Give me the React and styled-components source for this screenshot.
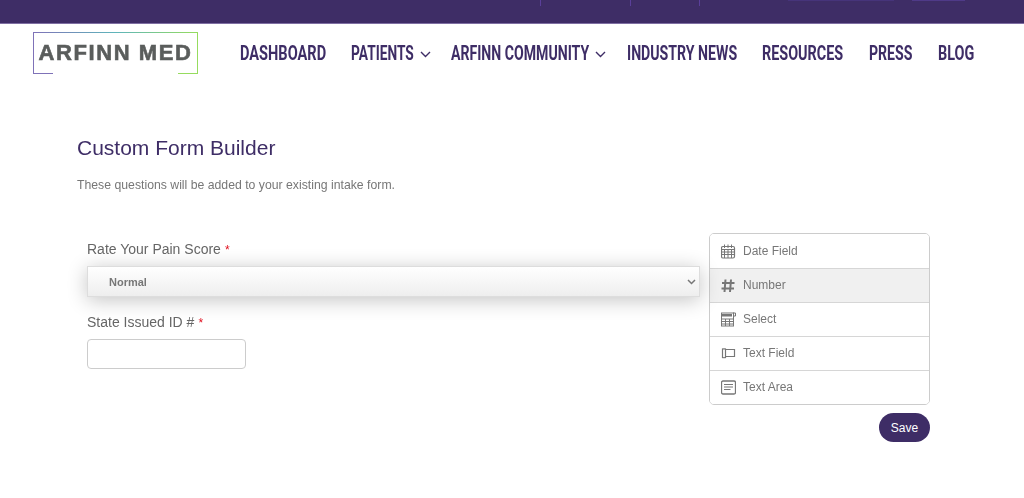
import React from 'react';
import styled, { createGlobalStyle } from 'styled-components';

const GlobalStyle = createGlobalStyle`
    html, body {
        margin: 0;
        padding: 0;
        background: #fff;
        font-family: "Liberation Sans", Arial, sans-serif;
    }
    body {
        overflow: hidden;
    }
`;

// the reference is a slightly soft capture
const Page = styled.div`
    filter: blur(0.35px);
`;

// top bar
const TopBar = styled.div`
    height: 23px;
    background: #3e2d66;
    border-bottom: 1px solid #7f6fa3;
    display: flex;
    align-items: flex-start;
    padding-left: 540px;
`;
const TopDivider = styled.span`
    display: block;
    width: 1px;
    height: 6px;
    background: #5a3f9a;
    margin-right: ${props => props.gap}px;
`;
const TopLine = styled.span`
    display: block;
    width: ${props => props.w}px;
    height: 1px;
    background: ${props => props.color};
    margin-right: ${props => props.gap}px;
`;

// header
const Header = styled.header`
    height: 60px;
    display: flex;
    align-items: flex-start;
    padding: 8px 0 0 33px;
`;
const Logo = styled.div`
    position: relative;
    box-sizing: border-box;
    width: 165px;
    height: 42px;
    display: flex;
    align-items: center;
    justify-content: center;
    font-weight: 700;
    font-size: 22px;
    letter-spacing: 1.6px;
    color: #5a5d5c;
    -webkit-text-stroke: 0.6px #5a5d5c;
    white-space: nowrap;
    border-left: 1px solid #7f72b8;
    border-right: 1px solid #96dc5e;
`;
const LogoTop = styled.span`
    position: absolute;
    top: 0;
    left: -1px;
    right: -1px;
    height: 1px;
    background: linear-gradient(90deg, #7f72b8 0%, #5fb5bb 50%, #96dc5e 100%);
`;
const LogoCorner = styled.span`
    position: absolute;
    bottom: 0;
    width: 20px;
    height: 1px;
    ${props => (props.right ? 'right: -1px; background: #96dc5e;' : 'left: -1px; background: #7f72b8;')}
`;
const Nav = styled.nav`
    display: flex;
    align-items: center;
    height: 28px;
    margin-top: 7px;
    margin-left: 42px;
`;
const NavItem = styled.a`
    display: flex;
    align-items: center;
    white-space: nowrap;
    width: ${props => props.w}px;
`;
const NavLabel = styled.span`
    display: block;
    width: ${props => props.textW}px;
    font-family: "Roboto", "Liberation Sans", sans-serif;
    font-weight: 700;
    font-size: 20px;
    color: #3e2d66;
    transform: scaleX(${props => props.scale});
    transform-origin: left center;
`;
const Chevron = styled.svg`
    width: 11px;
    height: 7px;
    margin-left: 6px;
    margin-top: 2px;
    fill: none;
    stroke: #3e2d66;
    stroke-width: 1.4;
`;

// main
const Main = styled.main`
    padding: 44px 94px 0 77px;
`;
const Title = styled.h1`
    margin: 0;
    font-weight: 400;
    font-size: 21px;
    line-height: 24px;
    color: #3e2d66;
`;
const Intro = styled.p`
    margin: 18px 0 0;
    font-size: 12.25px;
    line-height: 14px;
    color: #777;
`;
const Columns = styled.div`
    display: flex;
    align-items: flex-start;
    margin-top: 41px;
`;
const FormArea = styled.div`
    width: 613px;
    margin-left: 10px;
    padding-top: 7px;
`;
const Label = styled.label`
    display: block;
    font-size: 14px;
    line-height: 18px;
    color: #666;
`;
const Required = styled.span`
    color: #e0101f;
    font-size: 12px;
    margin-left: 4px;
`;
const SelectWrap = styled.div`
    position: relative;
    margin: 7px 0 16px;
`;
const Select = styled.select`
    display: block;
    box-sizing: border-box;
    width: 613px;
    height: 31px;
    appearance: none;
    border: 1px solid #ddd;
    border-radius: 0;
    padding-left: 21px;
    background: linear-gradient(180deg, #fff 0%, #eee 100%);
    box-shadow: 0 3px 20px rgba(0, 0, 0, 0.24);
    font-family: inherit;
    font-weight: 700;
    font-size: 11px;
    color: #777;
`;
const SelectArrow = styled.svg`
    position: absolute;
    right: 4px;
    top: 13px;
    width: 9px;
    height: 6px;
    fill: none;
    stroke: #777;
    stroke-width: 1.5;
`;
const TextInput = styled.input`
    display: block;
    box-sizing: border-box;
    width: 159px;
    height: 30px;
    margin-top: 7px;
    border: 1px solid #ccc;
    border-radius: 4px;
    background: #fff;
`;
const Side = styled.div`
    width: 221px;
    margin-left: 9px;
    display: flex;
    flex-direction: column;
    align-items: flex-end;
`;
const FieldList = styled.ul`
    box-sizing: border-box;
    list-style: none;
    width: 100%;
    margin: 0;
    padding: 0;
    border: 1px solid #ccc;
    border-radius: 5px;
    overflow: hidden;
`;
const FieldItem = styled.li`
    box-sizing: border-box;
    height: 34px;
    display: flex;
    align-items: center;
    padding-left: 11px;
    gap: 7px;
    font-size: 12px;
    color: #777;
    background: ${props => (props.active ? '#f0f0f0' : '#fff')};
    & + & {
        border-top: 1px solid #d6d6d6;
        padding-bottom: 1px;
    }
`;
const FieldIcon = styled.svg`
    width: 15px;
    height: 15px;
    flex: none;
    fill: none;
    stroke: #777;
    stroke-width: 1;
`;
const SaveButton = styled.button`
    height: 29px;
    width: 51px;
    margin-top: 8px;
    border: 0;
    border-radius: 15px;
    background: #3e2d66;
    color: #fff;
    font-family: inherit;
    font-size: 12px;
    padding: 0;
`;

// data
const navItems = [
    { label: 'DASHBOARD', w: 111, textW: 86, scale: 0.728 },
    { label: 'PATIENTS', w: 100, textW: 63, scale: 0.687, caret: true },
    { label: 'ARFINN COMMUNITY', w: 176, textW: 138, scale: 0.705, caret: true },
    { label: 'INDUSTRY NEWS', w: 135, textW: 110, scale: 0.707 },
    { label: 'RESOURCES', w: 107, textW: 81, scale: 0.72 },
    { label: 'PRESS', w: 69, textW: 43, scale: 0.705 },
    { label: 'BLOG', w: 36, textW: 36, scale: 0.72 },
];

const icons = {
    date: (
        <>
            <rect x="0.5" y="2.5" width="13" height="11.5" rx="1.5" strokeWidth="1.2" />
            <path d="M3.5 0.5v3.5M7 0.5v3.5M10.5 0.5v3.5M0.5 5.5h13M0.5 8h13M0.5 10.5h13M3.5 5.5V14M7 5.5V14M10.5 5.5V14" />
        </>
    ),
    number: <path strokeWidth="2" d="M4.5 1.5 3.5 14M10 1.5 9 14M1 5h12.5M0.5 10.5h12.5" />,
    select: (
        <>
            <rect x="0.5" y="1" width="12" height="13" />
            <path strokeWidth="2.4" d="M0.5 3.2h10.5" />
            <path d="M0.5 7h12M0.5 9.5h12M0.5 12h12M4.5 7v7M8.5 7v7M12 1h2.5v3H12" />
        </>
    ),
    text: (
        <>
            <path strokeWidth="1.2" d="M5 3.5h8.5v7H5" />
            <path strokeWidth="1.2" d="M1.5 2.5v9.5M4.5 2.5v9.5M1.5 2.5q1.5 1 3 0M1.5 12q1.5-1 3 0" />
        </>
    ),
    area: (
        <>
            <rect x="0.5" y="1" width="14" height="13" rx="1.5" strokeWidth="1.3" />
            <path strokeWidth="1.2" d="M3 4.5h9M3 7h9M3 9.5h6.5" />
        </>
    ),
};

const fields = [
    { key: 'date', label: 'Date Field' },
    { key: 'number', label: 'Number', active: true },
    { key: 'select', label: 'Select' },
    { key: 'text', label: 'Text Field' },
    { key: 'area', label: 'Text Area' },
];

const App = () => (
    <Page>
        <GlobalStyle />
        <TopBar>
            <TopDivider gap={89} />
            <TopDivider gap={68} />
            <TopDivider gap={88} />
            <TopLine w={106} gap={18} color="#46347a" />
            <TopLine w={53} gap={0} color="#4f3a88" />
        </TopBar>
        <Header>
            <Logo>
                <LogoTop />
                ARFINN MED
                <LogoCorner />
                <LogoCorner right />
            </Logo>
            <Nav>
                {navItems.map(item => (
                    <NavItem key={item.label} w={item.w}>
                        <NavLabel textW={item.textW} scale={item.scale}>
                            {item.label}
                        </NavLabel>
                        {item.caret && (
                            <Chevron viewBox="0 0 11 7">
                                <path d="M1 1l4.5 4.5L10 1" />
                            </Chevron>
                        )}
                    </NavItem>
                ))}
            </Nav>
        </Header>
        <Main>
            <Title>Custom Form Builder</Title>
            <Intro>These questions will be added to your existing intake form.</Intro>
            <Columns>
                <FormArea>
                    <Label>
                        Rate Your Pain Score<Required>*</Required>
                    </Label>
                    <SelectWrap>
                        <Select defaultValue="Normal">
                            <option>Normal</option>
                        </Select>
                        <SelectArrow viewBox="0 0 9 6">
                            <path d="M1 1l3.5 3.5L8 1" />
                        </SelectArrow>
                    </SelectWrap>
                    <Label>
                        State Issued ID #<Required>*</Required>
                    </Label>
                    <TextInput type="text" />
                </FormArea>
                <Side>
                    <FieldList>
                        {fields.map(field => (
                            <FieldItem key={field.key} active={field.active}>
                                <FieldIcon viewBox="0 0 15 15">{icons[field.key]}</FieldIcon>
                                {field.label}
                            </FieldItem>
                        ))}
                    </FieldList>
                    <SaveButton>Save</SaveButton>
                </Side>
            </Columns>
        </Main>
    </Page>
);

export default App;
